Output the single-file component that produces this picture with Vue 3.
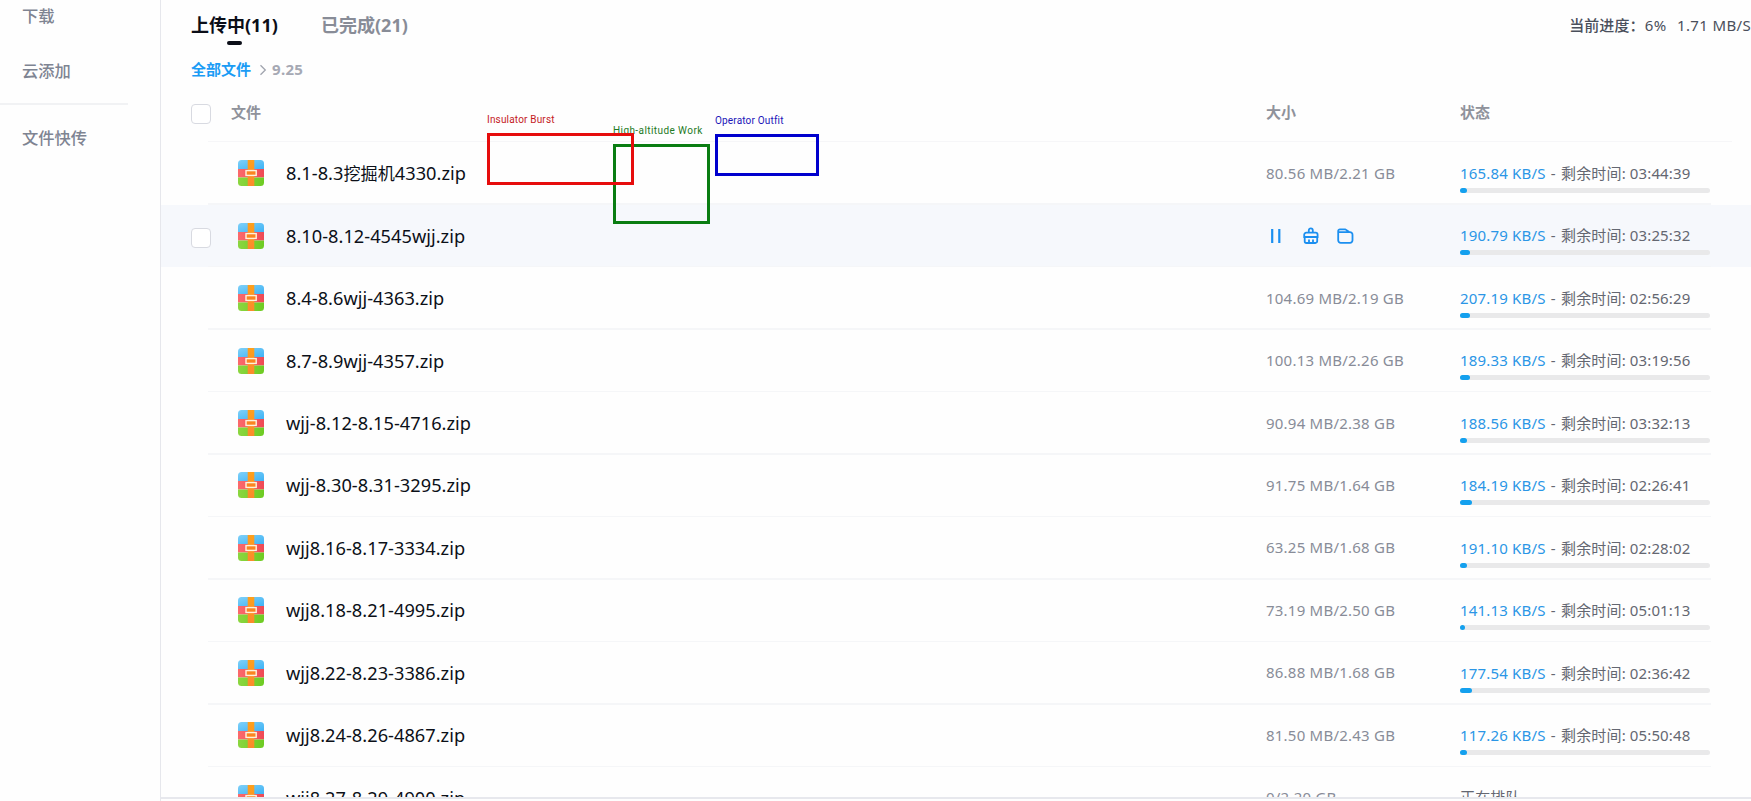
<script setup>
const files = [
  { name: ['8.1-8.3', '挖掘机', '4330.zip'], size: '80.56 MB/2.21 GB', speed: '165.84 KB/S', left: '03:44:39', bar: 7 },
  { name: ['8.10-8.12-4545wjj.zip'], speed: '190.79 KB/S', left: '03:25:32', bar: 10, hover: true },
  { name: ['8.4-8.6wjj-4363.zip'], size: '104.69 MB/2.19 GB', speed: '207.19 KB/S', left: '02:56:29', bar: 10 },
  { name: ['8.7-8.9wjj-4357.zip'], size: '100.13 MB/2.26 GB', speed: '189.33 KB/S', left: '03:19:56', bar: 10 },
  { name: ['wjj-8.12-8.15-4716.zip'], size: '90.94 MB/2.38 GB', speed: '188.56 KB/S', left: '03:32:13', bar: 7 },
  { name: ['wjj-8.30-8.31-3295.zip'], size: '91.75 MB/1.64 GB', speed: '184.19 KB/S', left: '02:26:41', bar: 12 },
  { name: ['wjj8.16-8.17-3334.zip'], size: '63.25 MB/1.68 GB', speed: '191.10 KB/S', left: '02:28:02', bar: 7 },
  { name: ['wjj8.18-8.21-4995.zip'], size: '73.19 MB/2.50 GB', speed: '141.13 KB/S', left: '05:01:13', bar: 5 },
  { name: ['wjj8.22-8.23-3386.zip'], size: '86.88 MB/1.68 GB', speed: '177.54 KB/S', left: '02:36:42', bar: 12 },
  { name: ['wjj8.24-8.26-4867.zip'], size: '81.50 MB/2.43 GB', speed: '117.26 KB/S', left: '05:50:48', bar: 7 },
  { name: ['wjj8.27-8.29-4900.zip'], size: '0/2.20 GB', queued: true }
]
</script>

<template>
  <div class="app">
    <svg class="defs" width="0" height="0">
      <defs>
        <linearGradient id="zb" x1="0" y1="0" x2="1" y2="1"><stop offset="0" stop-color="#7fd0f8" /><stop offset="1" stop-color="#3fb3f5" /></linearGradient>
        <linearGradient id="zr" x1="0" y1="0" x2="1" y2="0"><stop offset="0" stop-color="#fb6a6c" /><stop offset="1" stop-color="#ee4a55" /></linearGradient>
        <linearGradient id="zg" x1="0" y1="0" x2="1" y2="0"><stop offset="0" stop-color="#8bd640" /><stop offset="1" stop-color="#6dcb22" /></linearGradient>
        <linearGradient id="zo" x1="0" y1="0" x2="0" y2="1"><stop offset="0" stop-color="#fda01c" /><stop offset="1" stop-color="#fb8a2c" /></linearGradient>
        <clipPath id="zc"><rect width="26" height="26" rx="3.5" /></clipPath>
      </defs>
    </svg>

    <aside class="side">
      <div class="nav">下载</div>
      <div class="nav">云添加</div>
      <div class="rule"></div>
      <div class="nav">文件快传</div>
    </aside>

    <main class="main">
      <header class="top">
        <div class="tab on">上传中(11)</div>
        <div class="tab">已完成(21)</div>
        <div class="total"><b>当前进度：</b><span class="pct">6%</span><span class="rate">1.71 MB/S</span></div>
      </header>
      <div class="crumb">
        <span class="root">全部文件</span>
        <svg width="8" height="12" viewBox="0 0 8 12"><path d="M1.5 1.2 6.3 6 1.5 10.8" fill="none" stroke="#a0a4ae" stroke-width="1.3" /></svg>
        <span class="cur">9.25</span>
      </div>
      <div class="head">
        <i class="check"></i>
        <span class="h-file">文件</span>
        <span class="h-size">大小</span>
        <span class="h-stat">状态</span>
      </div>
      <div class="list">
        <div v-for="f in files" :key="f.name[0]" class="row" :class="{ hover: f.hover }">
          <div class="pick"><i v-if="f.hover" class="check"></i></div>
          <svg class="zip" width="26" height="26" viewBox="0 0 26 26">
            <g clip-path="url(#zc)">
              <rect width="26" height="9" fill="url(#zb)" />
              <rect y="9" width="26" height="8.5" fill="url(#zr)" />
              <rect y="17.5" width="26" height="8.5" fill="url(#zg)" />
              <rect x="9.7" width="6.6" height="26" fill="url(#zo)" />
            </g>
            <rect x="8" y="10.6" width="10.2" height="4.8" fill="#fb8420" stroke="#fff2dc" stroke-width="1.4" />
          </svg>
          <div class="name"><span v-for="(part, i) in f.name" :key="i" :class="{ han: i === 1 }">{{ part }}</span></div>
          <div class="size">
            <div v-if="f.hover" class="acts">
              <svg width="16" height="18" viewBox="0 0 16 18"><path d="M4.2 2v14M11.3 2v14" stroke-width="2.2" /></svg>
              <svg width="16" height="18" viewBox="0 0 16 18"><path d="M5.8 5.7V3.3a2 2 0 0 1 4 0v2.4M3.2 5.7h9.4a2 2 0 0 1 2 2V10H1.2V7.7a2 2 0 0 1 2-2zM1.7 10v4.2a1.8 1.8 0 0 0 1.8 1.8h8.9a1.8 1.8 0 0 0 1.8-1.8V10M6 12.5V16M10 12.5V16" /></svg>
              <svg width="17" height="18" viewBox="0 0 17 18"><path d="M1.2 6V4a1.7 1.7 0 0 1 1.7-1.7h5.3l3.8 2.5M1.2 5.2h11.8a2.5 2.5 0 0 1 2.5 2.5v5.6a2.5 2.5 0 0 1-2.5 2.5H3.7a2.5 2.5 0 0 1-2.5-2.5z" /></svg>
            </div>
            <template v-else>{{ f.size }}</template>
          </div>
          <div class="stat">
            <div v-if="f.queued" class="line">正在排队</div>
            <template v-else>
              <div class="line"><span class="speed">{{ f.speed }}</span><span class="dash">-</span><span>剩余时间: {{ f.left }}</span></div>
              <div class="track"><div class="fill" :style="{ width: f.bar + 'px' }"></div></div>
            </template>
          </div>
        </div>
      </div>
    </main>

    <div class="box green"><span>High-altitude Work</span></div>
    <div class="box red"><span>Insulator Burst</span></div>
    <div class="box blue"><span>Operator Outfit</span></div>
  </div>
</template>

<style>
body { background: #fff; overflow: hidden; }
</style>

<style scoped>
* { box-sizing: border-box; }
.app { position: relative; display: flex; width: 1751px; height: 801px; overflow: hidden; background: #fefefe; font-family: "Noto Sans", "Noto Sans CJK SC", sans-serif; color: #0c1018; white-space: nowrap; }
.defs { position: absolute; }
.side { width: 160px; flex: none; }
.nav { height: 55px; padding-left: 22px; font: 500 16.3px/31px "Noto Sans CJK SC", sans-serif; color: #7e8492; }
.side .rule { width: 128px; height: 2px; margin-top: -7px; margin-bottom: 17px; background: #f1f2f4; }
.main { flex: 1; display: flex; flex-direction: column; height: 801px; border-left: 1px solid #e6e7ec; }
.top { display: flex; height: 52px; padding-left: 30px; }
.tab { position: relative; width: 130px; font: 700 18px/51px "Noto Sans", "Noto Sans CJK SC", sans-serif; color: #888c97; }
.tab.on { color: #0b0e18; }
.tab.on::after { content: ""; position: absolute; left: 36px; top: 41px; width: 15px; height: 4px; border-radius: 2px; background: #0b0e18; }
.total { display: flex; margin-left: auto; font-size: 15px; line-height: 50px; color: #4a4f5b; }
.total b { font-weight: 500; letter-spacing: .1px; }
.pct { padding-right: 5px; letter-spacing: .4px; }
.rate { padding-left: 5.5px; letter-spacing: .35px; }
.crumb { display: flex; align-items: center; height: 36px; padding-left: 30px; font-size: 15px; font-weight: 700; }
.crumb span { position: relative; top: -1.5px; }
.root { color: #1a9cf5; }
.crumb svg { margin: 0 5px 0 8px; }
.cur { color: #a6a9b4; letter-spacing: .3px; }
.head { display: flex; position: relative; align-items: center; height: 54px; padding-left: 30px; font-size: 15px; font-weight: 700; color: #8f929b; }
.head::after { content: ""; position: absolute; left: 47px; right: 19px; bottom: 0; height: 1px; background: #f6f6f8; }
.head span { position: relative; top: -3.5px; }
.check { display: block; width: 20px; height: 20px; border: 1px solid #d8dae1; border-radius: 4px; background: #fff; }
.head .check { margin-top: -2px; }
.h-file { width: 1035px; margin-left: 20px; }
.h-size { width: 194px; }
.list { flex: 1; min-height: 0; overflow: hidden; border-bottom: 2px solid #e7e8ed; margin-bottom: 2px; }
.row { position: relative; display: flex; align-items: center; height: 62.46px; padding-left: 30px; }
.row::after { content: ""; position: absolute; left: 47px; right: 40px; bottom: -.5px; height: 1.5px; background: #f5f6f8; }
.row.hover { background: linear-gradient(transparent 1px, #f6f8fc 1px); }
.pick { width: 47px; }
.pick .check { margin-top: 4px; }
.zip { flex: none; }
.name { width: 980px; margin-left: 22px; font-size: 18.2px; line-height: 28px; letter-spacing: .03px; }
.han { font-size: 17.1px; }
.size { width: 194px; margin-top: -1px; font-size: 15px; letter-spacing: .23px; color: #888c98; }
.acts { display: flex; gap: 19px; margin-top: 2px; padding-left: 2px; }
.acts svg { fill: none; stroke: #1b8ff0; stroke-width: 1.8; }
.acts svg:last-child { margin-left: -1px; }
.stat { width: 250px; height: 62px; padding-top: 18.7px; font-size: 15px; line-height: 24px; letter-spacing: .13px; color: #646771; }
.speed { color: #2b96e6; letter-spacing: .17px; }
.dash { margin: 0 5.3px; }
.track { height: 5px; margin-top: 3px; border-radius: 3px; background: #e9e9ea; }
.fill { height: 5px; border-radius: 3px; background: #14a0ee; }
.box { position: absolute; border: 3px solid; }
.box span { position: absolute; left: -3px; top: -24px; font: 10px/16px Roboto, sans-serif; letter-spacing: .17px; }
.red { left: 487px; top: 133px; width: 147px; height: 52px; border-color: #e60c0c; color: #c41a1f; }
.green { left: 613px; top: 144px; width: 97px; height: 80px; border-color: #0a7d12; color: #1d7a24; }
.green span { letter-spacing: .42px; }
.blue { left: 715px; top: 134px; width: 104px; height: 42px; border-color: #0000cd; color: #1a14b8; }
</style>
